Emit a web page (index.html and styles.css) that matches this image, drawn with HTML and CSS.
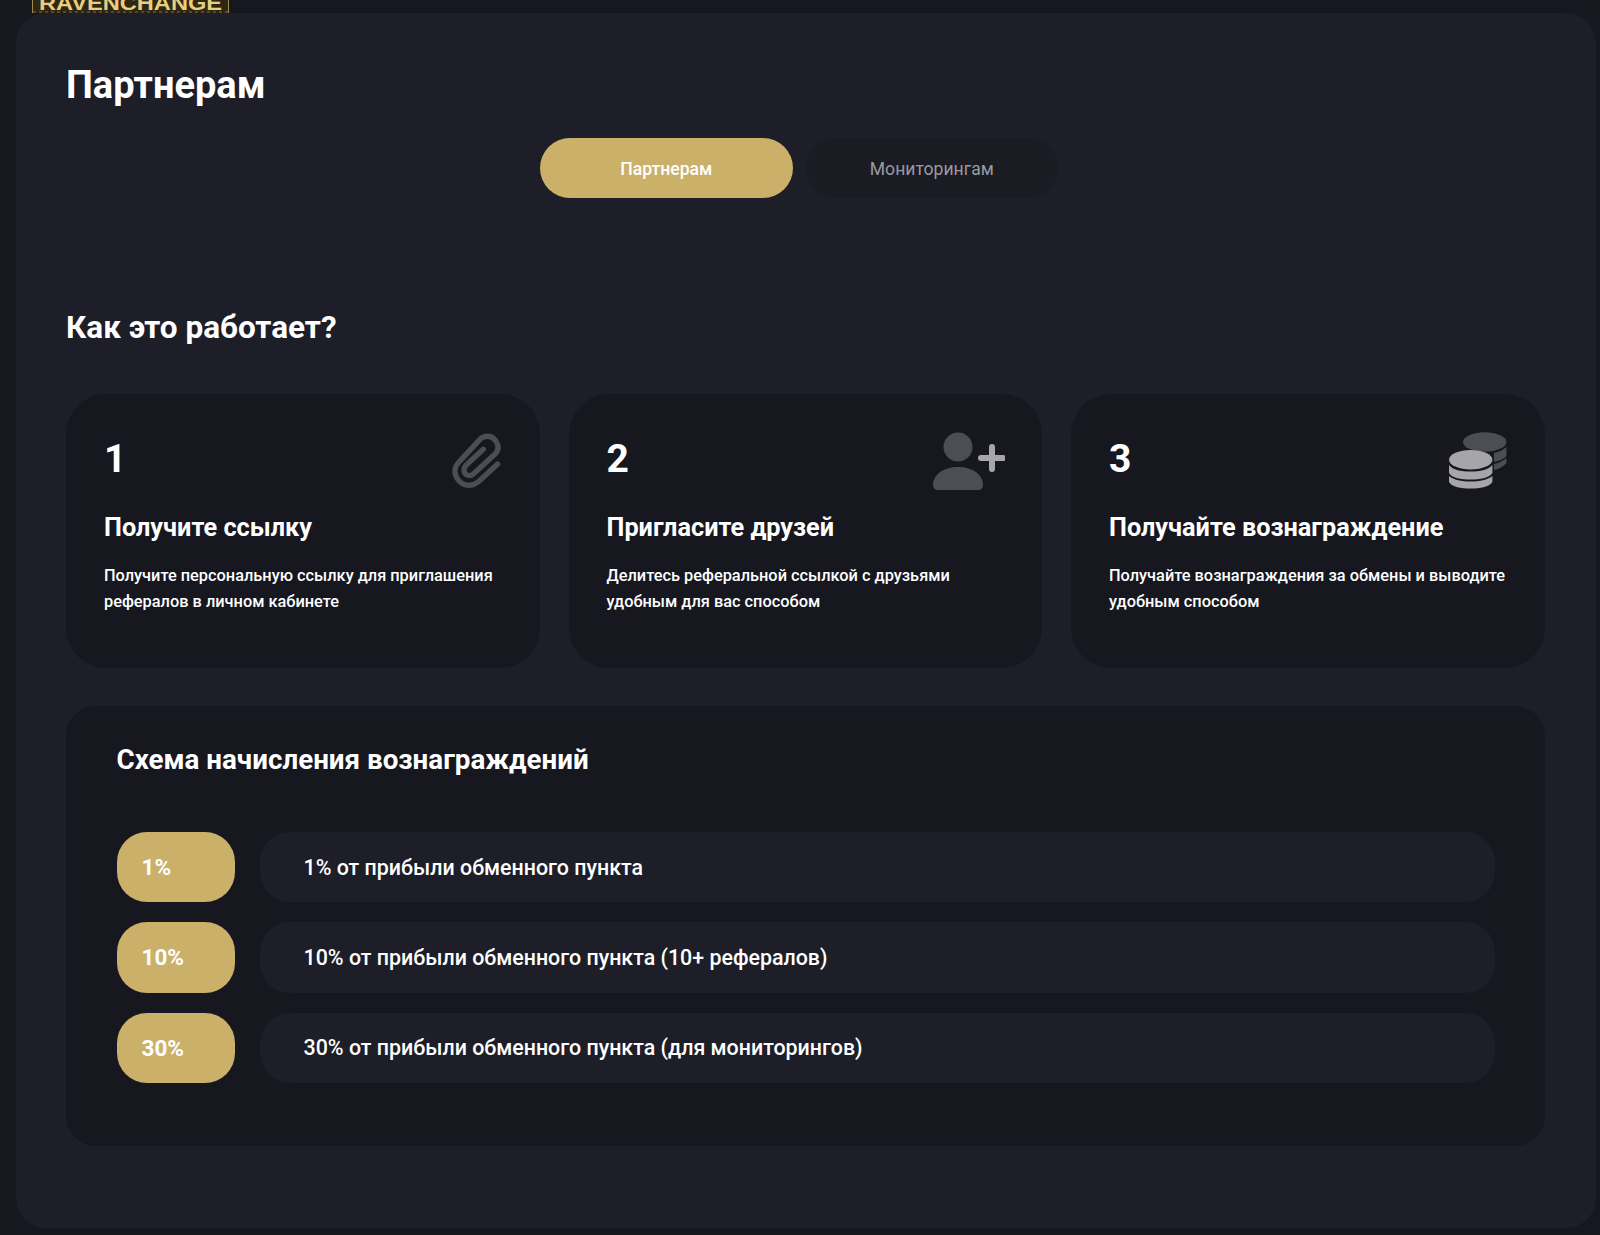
FILE: index.html
```html
<!DOCTYPE html>
<html lang="ru">
<head>
<meta charset="utf-8">
<title>Партнерам</title>
<link rel="stylesheet" href="styles.css">
</head>
<body>
<div class="topbar">
  <div class="logo"><span class="logo-text">RAVENCHANGE</span></div>
</div>
<main class="panel">
  <h1 class="page-title">Партнерам</h1>
  <div class="tabs">
    <button class="tab tab-active">Партнерам</button>
    <button class="tab">Мониторингам</button>
  </div>
  <h2 class="how-title">Как это работает?</h2>
  <section class="cards">
    <article class="card">
      <div class="card-head">
        <span class="card-num">1</span>
        <svg class="icon icon-clip" viewBox="57 96 159 174" width="53" height="58" fill="none" stroke="#4d4e54" stroke-width="16" stroke-linecap="round" stroke-linejoin="round"><path d="M203 192 L145 245 C125 262 98 258 85 240 C70 222 72 200 88 185 L150 118 C165 105 185 105 197 122 C208 138 205 152 195 162 L130 222 C120 232 105 225 103 215 C100 205 105 198 112 192 L160 148"/></svg>
      </div>
      <h3 class="card-title">Получите ссылку</h3>
      <p class="card-text">Получите персональную ссылку для приглашения рефералов в личном кабинете</p>
    </article>
    <article class="card">
      <div class="card-head">
        <span class="card-num">2</span>
        <svg class="icon icon-user" viewBox="0 0 72 58" width="72" height="58"><circle cx="25" cy="15" r="14.500" fill="#4d4e54"/><path d="M0 53 C0 43 10 35 25 35 C40 35 50 43 50 53 C50 56 48 58 45 58 L5 58 C2 58 0 56 0 53 Z" fill="#4d4e54"/><path d="M59 15 V37 M48 26 H70" stroke="#a5a5aa" stroke-width="6" stroke-linecap="round" fill="none"/></svg>
      </div>
      <h3 class="card-title">Пригласите друзей</h3>
      <p class="card-text">Делитесь реферальной ссылкой с друзьями удобным для вас способом</p>
    </article>
    <article class="card">
      <div class="card-head">
        <span class="card-num">3</span>
        <svg class="icon icon-coins" viewBox="0 0 58 58" width="58" height="58"><g fill="#4d4e54"><ellipse cx="35.700" cy="10" rx="21.700" ry="9.700"/><path d="M45 21 C50 20 54 18 57.400 15 V24 C55 27 50 29 45 30 Z"/><path d="M45 32 C50 31 54 29 57.400 26 V31 C55 34 50 37 45 38 Z"/></g><g fill="#a5a5aa"><ellipse cx="21.700" cy="27.700" rx="21.700" ry="9.700"/><path d="M0 33 C4 38 12 39.500 21.700 39.500 C31 39.500 39 38 43.400 33 V41 C40 46 31 47.500 21.700 47.500 C12 47.500 3 46 0 41 Z"/><path d="M0 44 C5 48 12 49.500 21.700 49.500 C31 49.500 38 48 43.400 44 V50 C40 55 31 56.500 21.700 56.500 C12 56.500 3 55 0 50 Z"/></g></svg>
      </div>
      <h3 class="card-title">Получайте вознаграждение</h3>
      <p class="card-text">Получайте вознаграждения за обмены и выводите удобным способом</p>
    </article>
  </section>
  <section class="scheme">
    <h2 class="scheme-title">Схема начисления вознаграждений</h2>
    <div class="rows">
      <div class="row"><div class="badge">1%</div><div class="row-text">1% от прибыли обменного пункта</div></div>
      <div class="row"><div class="badge">10%</div><div class="row-text">10% от прибыли обменного пункта (10+ рефералов)</div></div>
      <div class="row"><div class="badge">30%</div><div class="row-text">30% от прибыли обменного пункта (для мониторингов)</div></div>
    </div>
  </section>
</main>
</body>
</html>
```
FILE: styles.css
```css
* { box-sizing: border-box; }
html, body { margin: 0; padding: 0; }
body {
  background: #16171f;
  color: #fff;
  font-family: Roboto, "Noto Sans", sans-serif;
  height: 1235px;
  overflow: hidden;
}
.topbar {
  height: 13px;
  padding-left: 32px;
  overflow: hidden;
}
.logo {
  width: 197px;
  height: 13px;
  background: repeating-linear-gradient(90deg, #5a4822 0 3px, #2c2412 3px 6px);
  border-left: 1px solid #a08a4c;
  border-right: 1px solid #a08a4c;
  overflow: hidden;
}
.logo-text {
  display: block;
  height: 18px;
  margin-top: -7px;
  background: #2e2713;
  font-family: "Liberation Sans", sans-serif;
  font-weight: 700;
  font-size: 20px;
  line-height: 20px;
  white-space: nowrap;
  text-align: center;
  color: #e8cf80;
  transform: scaleX(1.180);
}
.panel {
  margin-left: 16px;
  width: 1580px;
  height: 1215px;
  background: #1d1e27;
  border-radius: 30px;
  padding: 48px 0 0 50px;
}
.page-title {
  margin: 0;
  font-size: 38px;
  line-height: 48px;
  font-weight: 700;
}
.tabs {
  display: flex;
  gap: 13px;
  margin: 29px 0 0 474px;
}
.tab {
  width: 252.500px;
  height: 60px;
  padding: 1px 0 0;
  border: 0;
  border-radius: 30px;
  background: #1a1b23;
  color: #9a9a9f;
  font-family: inherit;
  font-size: 17.600px;
}
.tab-active {
  background: #cbb06a;
  color: #fff;
  font-weight: 500;
}
.how-title {
  margin: 108px 0 0;
  font-size: 31.500px;
  line-height: 44px;
  font-weight: 700;
}
.cards {
  display: grid;
  grid-template-columns: repeat(3, 473.500px);
  gap: 29px;
  margin-top: 44px;
}
.card {
  height: 274px;
  background: #16171f;
  border-radius: 40px;
  padding: 38px 37.500px 0 38px;
}
.card-head {
  display: flex;
  justify-content: space-between;
  align-items: flex-start;
  height: 58px;
}
.card-num {
  font-size: 39px;
  line-height: 54px;
  font-weight: 700;
}
.icon { flex: none; }
.card-title {
  margin: 21px 0 0;
  font-size: 25.300px;
  line-height: 34px;
  font-weight: 700;
}
.card-text {
  margin: 17.500px 0 0;
  font-size: 16.350px;
  line-height: 26px;
  font-weight: 500;
}
.scheme {
  margin-top: 38px;
  width: 1478.500px;
  height: 440px;
  background: #16171f;
  border-radius: 30px;
  padding: 34px 50px 0 50.500px;
}
.scheme-title {
  margin: 0;
  font-size: 27.750px;
  line-height: 40px;
  font-weight: 700;
}
.rows {
  display: flex;
  flex-direction: column;
  gap: 20px;
  margin-top: 52px;
}
.row {
  display: flex;
  gap: 25px;
  height: 70.250px;
}
.badge {
  width: 118px;
  flex: none;
  background: #cbb06a;
  border-radius: 30px;
  padding-left: 25px;
  display: flex;
  align-items: center;
  font-size: 22.500px;
  font-weight: 700;
}
.row-text {
  flex: 1;
  background: #1d1e27;
  border-radius: 30px;
  padding-left: 44px;
  display: flex;
  align-items: center;
  font-size: 21.400px;
  font-weight: 500;
}
```
